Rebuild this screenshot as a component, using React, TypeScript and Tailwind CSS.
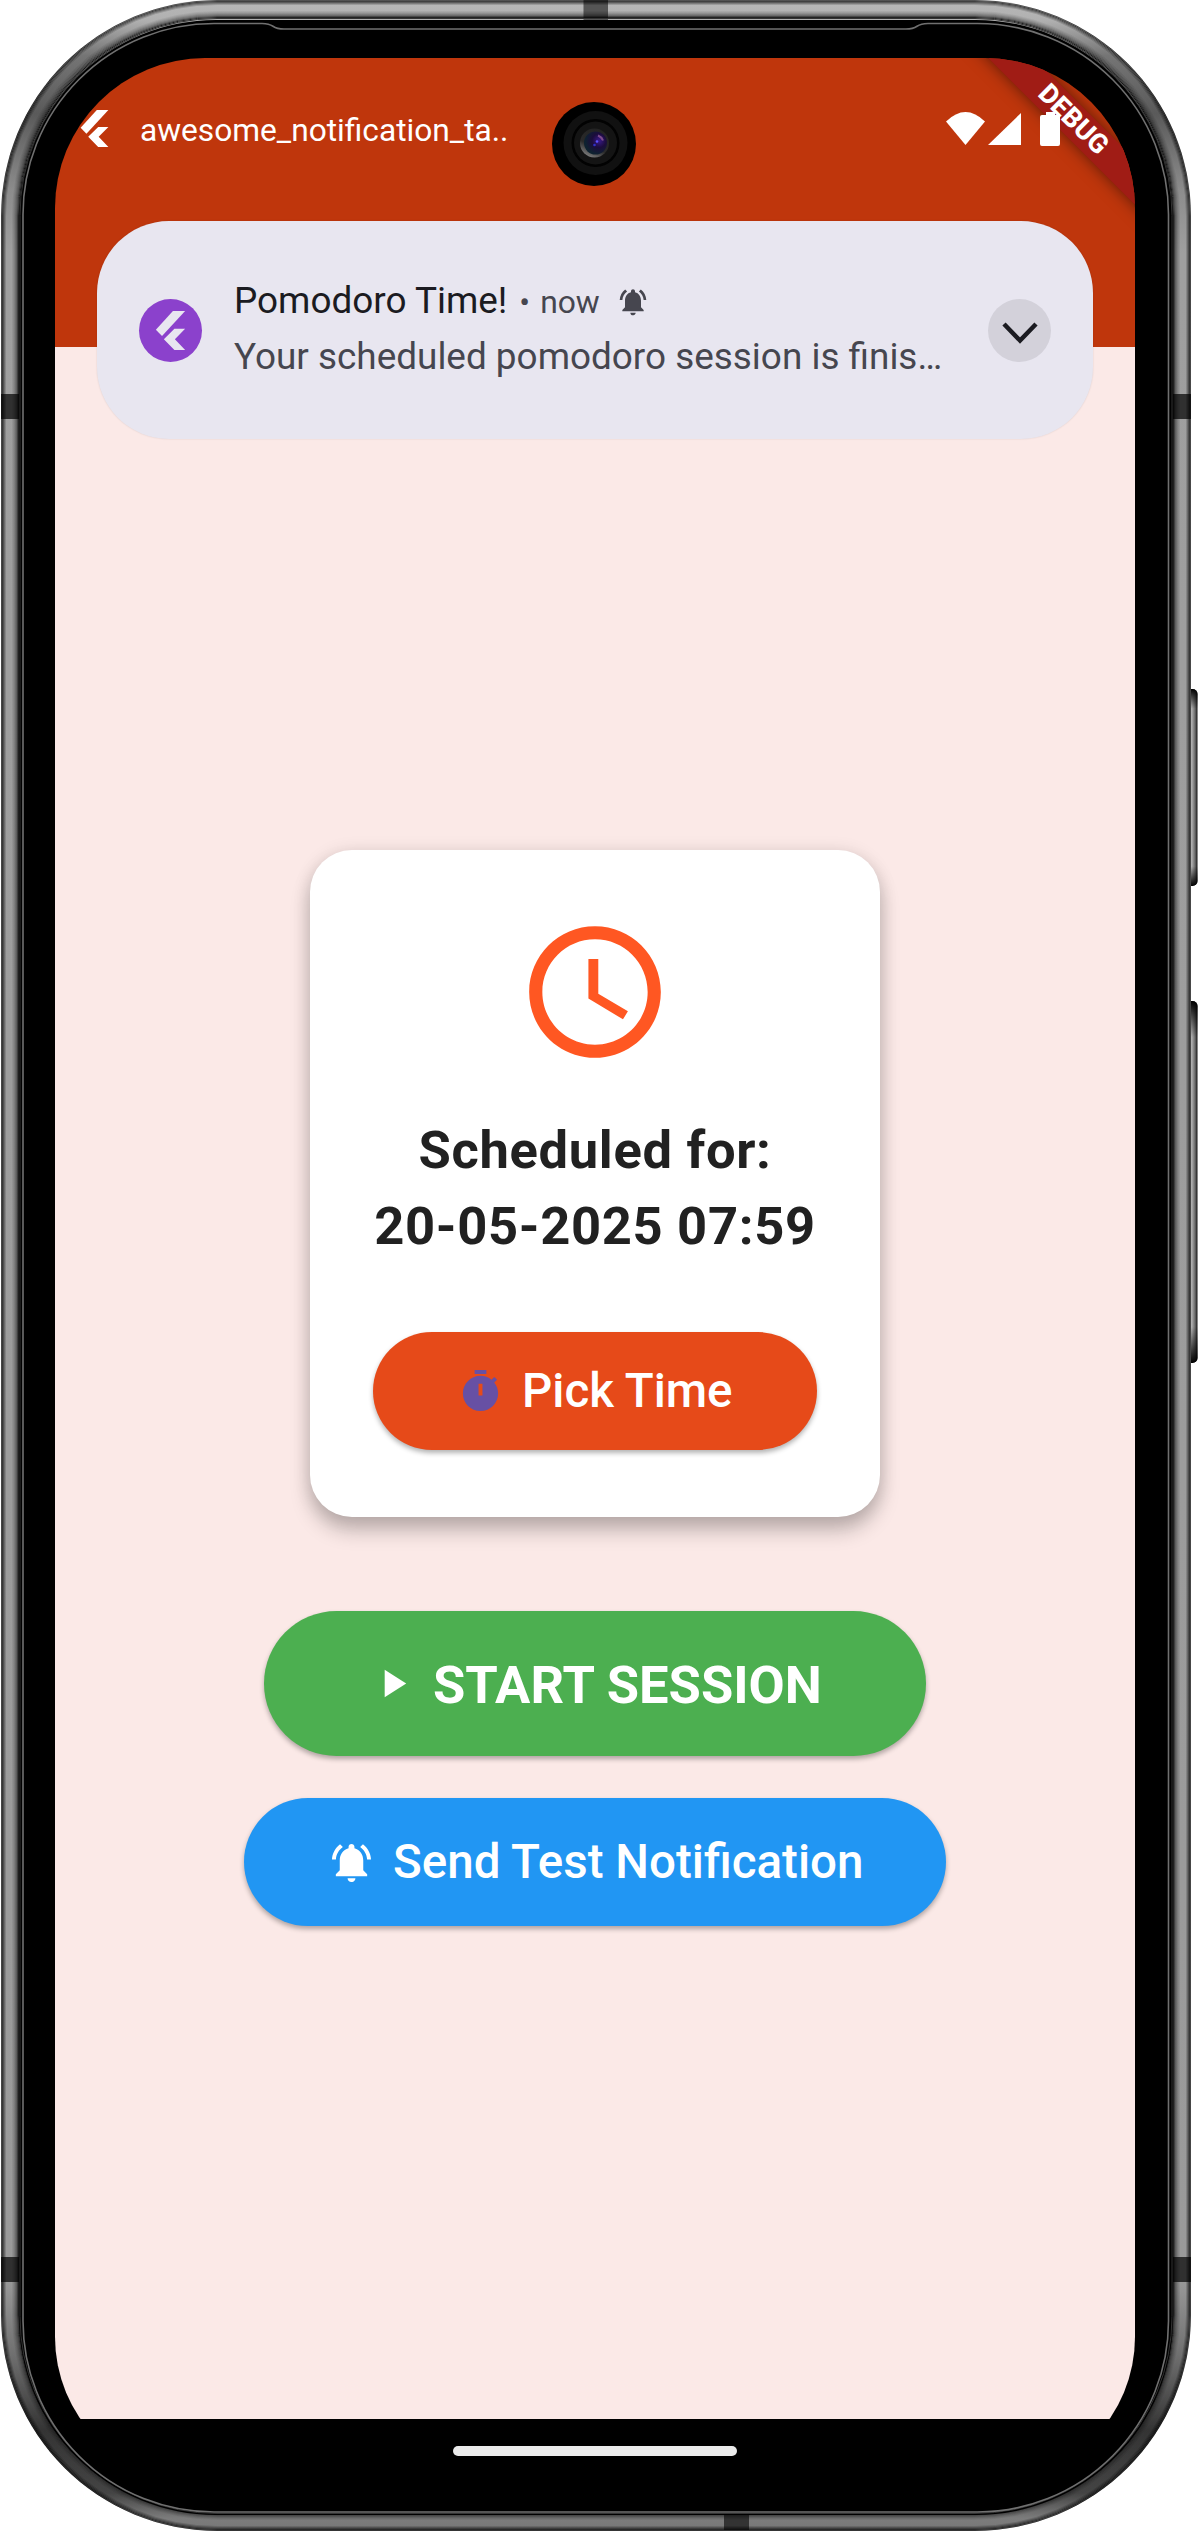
import React from "react";

const BELL_PATH =
  "M7.58 4.08L6.15 2.65C3.75 4.48 2.17 7.3 2.03 10.5h2c.15-2.65 1.51-4.97 3.55-6.42zm12.39 6.42h2c-.15-3.2-1.73-6.02-4.12-7.85l-1.42 1.43c2.02 1.45 3.39 3.77 3.54 6.42zM18 11c0-3.07-1.64-5.64-4.5-6.32V4c0-.83-.67-1.5-1.5-1.5s-1.5.67-1.5 1.5v.68C7.63 5.36 6 7.92 6 11v5l-2 2v1h16v-1l-2-2v-5zm-6 11c.14 0 .27-.01.4-.04.65-.14 1.18-.58 1.44-1.18.1-.24.15-.5.15-.78h-4c.01 1.1.9 2 2.01 2z";

function BellIcon({ className }: { className: string }) {
  return (
    <svg viewBox="0 0 24 24" fill="currentColor" className={className}>
      <path d={BELL_PATH} />
    </svg>
  );
}

function FlutterLogo({ className }: { className: string }) {
  return (
    <svg viewBox="0 0 30 40" fill="currentColor" className={className}>
      <path d="M17.5 0H30L6.3 25.6 0 19.2z" />
      <path d="M19 18.3H30L19.5 29 30 40H19L8.2 29z" />
    </svg>
  );
}

// Stroke layers of the metal rim, from the outer edge inwards: [inset, grey, opacity].
const RIM_LAYERS: [number, string, number][] = [
  [0.5, "#000", 0.55],
  [1.5, "#000", 0.65],
  [2.5, "#000", 0.5],
  [3.5, "#000", 0.32],
  [4.5, "#000", 0.15],
  [11.5, "#000", 0.06],
  [12.5, "#000", 0.12],
  [13.5, "#000", 0.2],
  [14.5, "#000", 0.3],
  [15.5, "#000", 0.4],
  [16.5, "#000", 0.6],
  [17.5, "#000", 0.8],
];

function DeviceFrame() {
  return (
    <svg viewBox="0 0 1198 2531" className="absolute inset-0 h-[2531px] w-[1198px]">
      <defs>
        <linearGradient id="metal" x1="0" y1="0" x2="0" y2="2531" gradientUnits="userSpaceOnUse">
          <stop offset="0" stopColor="#b8b8b8" />
          <stop offset="0.008" stopColor="#b0b0b0" />
          <stop offset="0.022" stopColor="#757575" />
          <stop offset="0.045" stopColor="#5a5a5a" />
          <stop offset="0.075" stopColor="#8c8c8c" />
          <stop offset="0.1" stopColor="#9f9f9f" />
          <stop offset="0.9" stopColor="#9a9a9a" />
          <stop offset="0.93" stopColor="#707070" />
          <stop offset="0.96" stopColor="#343434" />
          <stop offset="0.985" stopColor="#444" />
          <stop offset="0.995" stopColor="#7c7c7c" />
          <stop offset="1" stopColor="#777" />
        </linearGradient>
        <linearGradient id="key" x1="0" y1="0" x2="1" y2="0">
          <stop offset="0" stopColor="#777" />
          <stop offset="0.5" stopColor="#b0b0b0" />
          <stop offset="0.8" stopColor="#666" />
          <stop offset="1" stopColor="#111" />
        </linearGradient>
        <linearGradient id="keyEnds" x1="0" y1="0" x2="0" y2="1">
          <stop offset="0" stopColor="#000" />
          <stop offset="0.1" stopColor="#000" stopOpacity="0" />
          <stop offset="0.9" stopColor="#000" stopOpacity="0" />
          <stop offset="1" stopColor="#000" />
        </linearGradient>
      </defs>
      {[
        [689, 197],
        [1001, 362],
      ].map(([y, h]) => (
        <g key={y}>
          <rect x="1186" y={y} width="11.5" height={h} rx="5" fill="url(#key)" />
          <rect x="1186" y={y} width="11.5" height={h} rx="5" fill="url(#keyEnds)" />
        </g>
      ))}
      <rect x="1" y="0" width="1190" height="2531" rx="216" fill="url(#metal)" />
      <rect x="583.5" y="0" width="24.5" height="21" fill="#555" />
      <rect x="724" y="2514" width="25" height="16" fill="#333" />
      {[394, 2257].map((y) => (
        <g key={y} fill="#303030">
          <rect x="1" y={y} width="18" height="25" />
          <rect x="1173" y={y} width="18" height="25" />
        </g>
      ))}
      {RIM_LAYERS.map(([d, color, opacity]) => (
        <rect
          key={d}
          x={1 + d}
          y={d}
          width={1190 - 2 * d}
          height={2531 - 2 * d}
          rx={216 - d}
          fill="none"
          stroke={color}
          strokeOpacity={opacity}
        />
      ))}
      <rect x="19" y="20" width="1154" height="2495" rx="197" fill="#000" />
      <rect x="20" y="18.5" width="1152" height="2495" rx="197" fill="none" stroke="#333" />
      <path
        d="M596 29H284C270 29 276 23.5 262 23.5H214A191 191 0 0 0 23 214.5V2321A191 191 0 0 0 214 2512H977.500A191 191 0 0 0 1168.500 2321V214.500A191 191 0 0 0 977.500 23.500H928C914 23.500 920 29 906 29H596"
        fill="none"
        stroke="#707070"
        strokeWidth="1.6"
      />
    </svg>
  );
}

function Camera() {
  return (
    <svg viewBox="0 0 84 84" className="absolute left-[497px] top-[44px] size-[84px]">
      <defs>
        <radialGradient id="lens" cx="0.65" cy="0.4" r="0.6">
          <stop offset="0" stopColor="#3a1a8c" />
          <stop offset="0.5" stopColor="#1c0c3c" />
          <stop offset="1" stopColor="#0e2230" />
        </radialGradient>
        <linearGradient id="ring" x1="0.2" y1="1" x2="0.7" y2="0">
          <stop offset="0" stopColor="#8a8a8a" />
          <stop offset="0.4" stopColor="#2a2a2a" />
          <stop offset="1" stopColor="#222" />
        </linearGradient>
      </defs>
      <circle cx="42" cy="42" r="42" fill="#000" />
      <circle cx="43.500" cy="41" r="32" fill="#111" />
      <circle cx="43.500" cy="41" r="24" fill="#020202" />
      <circle cx="43.500" cy="41" r="21.500" fill="#141414" />
      <circle cx="42.500" cy="41" r="14.500" fill="url(#ring)" />
      <circle cx="43.500" cy="41" r="11.500" fill="url(#lens)" />
      <path d="M46 33.500a9 9 0 0 1 5 5" stroke="#7c4a8c" strokeWidth="2" fill="none" />
      <circle cx="45" cy="39.500" r="1.300" fill="#5a50ff" />
      <circle cx="42.500" cy="43" r="1.300" fill="#3030c8" />
    </svg>
  );
}

function StatusBar() {
  return (
    <div className="relative flex h-[89px] items-end text-white">
      <FlutterLogo className="ml-[25px] h-[37px] w-[29px]" />
      <span className="mb-[-3px] ml-[31px] whitespace-nowrap text-[31.7px] leading-[38px]">
        awesome_notification_ta..
      </span>
      <svg viewBox="0 0 116 34" fill="currentColor" className="absolute left-[891px] top-[54px] h-[34px] w-[116px]">
        <path d="M0 9.500Q19.500-9.500 39 9.500L19.500 33z" />
        <path d="M75 1V33H42z" />
        <path d="M100 0H109V3H112.500Q114 3 114 5V32Q114 34 112 34H96Q94 34 94 32V5Q94 3 96 3H100z" />
      </svg>
    </div>
  );
}

function DebugRibbon() {
  return (
    <div className="absolute left-[868px] top-[46px] flex h-[31.500px] w-[300px] rotate-45 items-center justify-center bg-[#a01c15] text-[27px] font-extrabold leading-none text-white shadow-[0_0_16px_rgba(0,0,0,0.5)]">
      DEBUG
    </div>
  );
}

function NotificationCard() {
  return (
    <div className="absolute left-[42px] top-[163px] flex h-[218px] w-[996px] items-center rounded-[72px] bg-[#e8e6f0] pl-[42px] pr-[42px] shadow-[0_0_2px_rgba(0,0,0,0.12)]">
      <div className="flex size-[63px] shrink-0 items-center justify-center rounded-full bg-[#8b41cc] text-[#e8e6f0]">
        <FlutterLogo className="h-[39px] w-[31px]" />
      </div>
      <div className="mb-[2px] ml-[32px] flex w-[790px] flex-col">
        <div className="flex h-[56px] items-baseline whitespace-nowrap leading-[56px]">
          <span className="text-[36.9px] text-[#1b1b21]">Pomodoro Time!</span>
          <span className="ml-[12px] text-[32px] text-[#46464f]">•</span>
          <span className="ml-[10px] text-[31.8px] text-[#46464f]">now</span>
          <BellIcon className="ml-[17px] mt-[2px] size-[32px] self-center text-[#46464f]" />
        </div>
        <p className="h-[56px] whitespace-nowrap text-[36.9px] leading-[56px] text-[#46464f]">
          Your scheduled pomodoro session is finis…
        </p>
      </div>
      <div className="absolute right-[42px] flex size-[63px] items-center justify-center rounded-full bg-[#d3d1da]">
        <svg viewBox="0 0 36 24" className="mt-[5px] h-[24px] w-[36px]">
          <path d="M2 3L18 19.500L34 3" fill="none" stroke="#1b1b21" strokeWidth="4.500" />
        </svg>
      </div>
    </div>
  );
}

function ScheduleCard() {
  return (
    <div className="flex h-[667px] w-[570px] flex-col items-center rounded-[42px] bg-white pt-[63px] shadow-[0_14px_20px_rgba(0,0,0,0.22),0_2px_18px_rgba(0,0,0,0.12)]">
      <svg viewBox="0 0 24 24" className="size-[158px] text-[#ff5722]" fill="currentColor">
        <path d="M11.990 2C6.470 2 2 6.480 2 12s4.470 10 9.990 10C17.520 22 22 17.520 22 12S17.520 2 11.990 2zM12 20c-4.420 0-8-3.580-8-8s3.580-8 8-8 8 3.580 8 8-3.580 8-8 8z" />
        <path d="M12.500 7H11v6l5.250 3.150.75-1.230-4.500-2.670z" />
      </svg>
      <div className="mt-[41px] whitespace-nowrap text-center text-[52.500px] font-bold leading-[76px] tracking-[0.68px] text-[#212121]">
        <p>Scheduled for:</p>
        <p>20-05-2025 07:59</p>
      </div>
      <button className="mt-[68px] flex h-[118px] w-[444px] items-center whitespace-nowrap rounded-full bg-[#e64a19] pl-[84px] text-[47.5px] font-medium text-white shadow-[0_3px_5px_rgba(0,0,0,0.3)]">
        <svg viewBox="0 0 24 24" className="size-[47px] shrink-0 text-[#6750a4]" fill="currentColor">
          <path d="M9 1h6v2H9zm10.030 6.390l1.420-1.420c-.43-.51-.9-.99-1.410-1.410l-1.420 1.420C16.070 4.740 14.120 4 12 4c-4.970 0-9 4.030-9 9s4.020 9 9 9 9-4.030 9-9c0-2.120-.74-4.070-1.970-5.610zM13 14h-2V8h2v6z" />
        </svg>
        <span className="ml-[18px] mt-[1px]">Pick Time</span>
      </button>
    </div>
  );
}

export default function App() {
  return (
    <div className="relative h-[2531px] w-[1198px] overflow-hidden bg-white pl-[55px] pt-[58px] font-['Roboto',sans-serif]">
      <DeviceFrame />
      <div className="relative flex h-[2424px] w-[1080px] flex-col overflow-hidden rounded-t-[150px] rounded-b-[145px] bg-black">
        <header className="relative h-[289px] shrink-0 bg-[#bf360c]">
          <DebugRibbon />
          <StatusBar />
        </header>
        <main className="flex h-[2072px] shrink-0 flex-col items-center bg-[#fbe9e7] pt-[503px]">
          <ScheduleCard />
          <button className="mt-[94px] flex h-[145px] w-[662px] items-center whitespace-nowrap rounded-full bg-[#4caf50] pl-[105px] text-[52.500px] font-bold text-white shadow-[0_3px_5px_rgba(0,0,0,0.3)]">
            <svg viewBox="0 0 24 24" className="size-[47px] shrink-0" fill="currentColor">
              <path d="M8 5v14l11-7z" />
            </svg>
            <span className="ml-[17px] mt-[3px]">START SESSION</span>
          </button>
          <button className="mt-[42px] flex h-[128px] w-[702px] items-center whitespace-nowrap rounded-full bg-[#2196f3] pl-[84px] text-[47.5px] font-medium text-white shadow-[0_3px_5px_rgba(0,0,0,0.3)]">
            <BellIcon className="size-[47px] shrink-0" />
            <span className="ml-[18px] mt-[1px]">Send Test Notification</span>
          </button>
        </main>
        <nav className="flex flex-1 justify-center bg-black pt-[27px]">
          <div className="h-[10px] w-[284px] rounded-full bg-[#ebebeb]" />
        </nav>
        <NotificationCard />
        <Camera />
      </div>
    </div>
  );
}
